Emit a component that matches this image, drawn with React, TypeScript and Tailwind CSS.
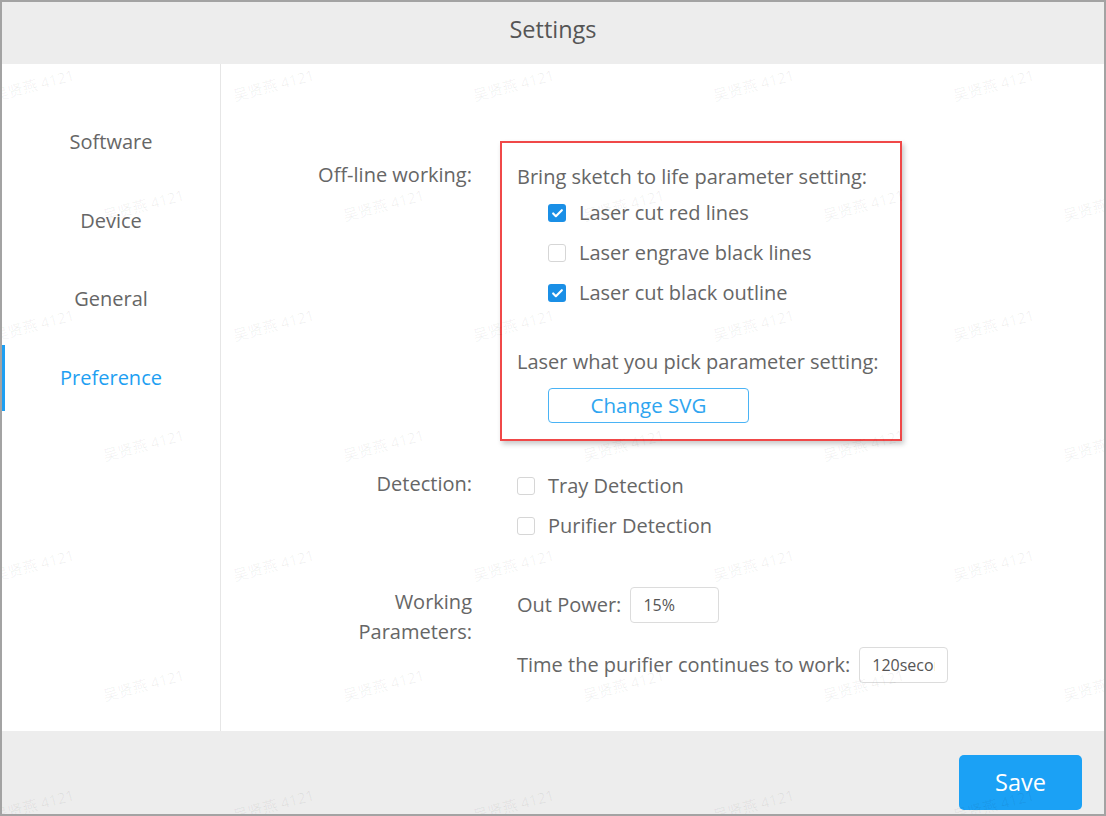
import { Check } from "lucide-react";

type CheckRowProps = { label: string; checked?: boolean };

function CheckRow({ label, checked }: CheckRowProps) {
  return (
    <div className="flex h-[40px] items-center">
      <span
        className={
          checked
            ? "flex h-[18px] w-[18px] items-center justify-center rounded-[3px] bg-[#1a8fe6]"
            : "h-[18px] w-[18px] rounded-[3px] border border-[#d6d6d6] bg-white"
        }
      >
        {checked && <Check className="h-[13px] w-[13px] text-white" strokeWidth={4} />}
      </span>
      <span className="ml-[13px] text-[20px] text-[#666]">{label}</span>
    </div>
  );
}

const marks: [number, number][] = [];
for (let r = 0; r < 7; r++) {
  for (let c = 0; c < 5; c++) {
    const x = (r % 2 === 0 ? -10 : 100) + c * 240;
    const y = 72 + r * 120;
    marks.push([x, y]);
  }
}

const navItems = ["Software", "Device", "General", "Preference"];

export default function App() {
  return (
    <div className="relative flex h-[816px] w-[1106px] flex-col overflow-hidden border-2 border-[#a3a3a3] bg-white font-['Open_Sans','Noto_Sans_CJK_SC',sans-serif] text-[#666]">
      <header className="flex h-[62px] shrink-0 items-center justify-center bg-[#ededed] pb-[6px] text-[23.5px] text-[#555]">
        Settings
      </header>

      <div className="flex min-h-0 flex-1">
        <nav className="w-[219px] shrink-0 border-r border-[#e6e6e6] pt-[39px]">
          {navItems.map((item) => {
            const active = item === "Preference";
            return (
              <div
                key={item}
                className={
                  active
                    ? "relative flex h-[78.5px] items-center justify-center text-[20px] text-[#1e9ff2]"
                    : "flex h-[78.5px] items-center justify-center text-[20px] text-[#666]"
                }
              >
                {active && <span className="absolute bottom-[6px] left-0 top-[6px] w-[3px] bg-[#1e9ff2]" />}
                {item}
              </div>
            );
          })}
        </nav>

        <main className="flex-1 pt-[77px]">
          <div className="flex">
            <div className="w-[251px] pt-[22px] text-right text-[20px] leading-[24px]">Off-line working:</div>
            <div className="ml-[28px] w-[402px] border-2 border-[#f04848] pb-[16px] pl-[15px] pt-[22px] shadow-[2px_3px_5px_rgba(0,0,0,0.22)]">
              <div className="text-[20px] leading-[24px]">Bring sketch to life parameter setting:</div>
              <div className="ml-[31px] mt-[4px]">
                <CheckRow label="Laser cut red lines" checked />
                <CheckRow label="Laser engrave black lines" />
                <CheckRow label="Laser cut black outline" checked />
              </div>
              <div className="mt-[37px] text-[20px] leading-[24px]">Laser what you pick parameter setting:</div>
              <button className="ml-[31px] mt-[14px] flex h-[35px] w-[201px] items-center justify-center rounded-[4px] border border-[#4ab3f5] text-[20.5px] text-[#2ea5f0]">
                Change SVG
              </button>
            </div>
          </div>

          <div className="mt-[25px] flex">
            <div className="w-[251px] text-right text-[20px] leading-[36px]">Detection:</div>
            <div className="ml-[45px]">
              <CheckRow label="Tray Detection" />
              <CheckRow label="Purifier Detection" />
            </div>
          </div>

          <div className="mt-[41px] flex">
            <div className="w-[251px] text-right text-[20px] leading-[30px]">
              Working
              <br />
              Parameters:
            </div>
            <div className="ml-[45px] flex flex-col gap-[24px]">
              <div className="flex items-center">
                <span className="text-[20px]">Out Power:</span>
                <input
                  readOnly
                  value="15%"
                  className="ml-[9px] h-[36px] w-[89px] rounded-[4px] border border-[#dcdcdc] px-[12px] text-[16px] text-[#555] outline-none"
                />
              </div>
              <div className="flex items-center">
                <span className="text-[20px]">Time the purifier continues to work:</span>
                <input
                  readOnly
                  value="120seconds"
                  className="ml-[9px] h-[36px] w-[89px] rounded-[4px] border border-[#dcdcdc] px-[12px] text-[16px] text-[#555] outline-none"
                />
              </div>
            </div>
          </div>
        </main>
      </div>

      <footer className="flex h-[83px] shrink-0 items-center justify-end bg-[#ededed] pr-[22px]">
        <button className="mt-[20px] h-[55px] w-[123px] rounded-[5px] bg-[#1ba1f5] text-[23.5px] text-white">Save</button>
      </footer>

      {marks.map(([x, y]) => (
        <span
          key={`${x}-${y}`}
          className="pointer-events-none absolute -rotate-[15deg] whitespace-nowrap text-[15px] text-black/[0.06]"
          style={{ left: x, top: y }}
        >
          吴贤燕 4121
        </span>
      ))}
    </div>
  );
}
